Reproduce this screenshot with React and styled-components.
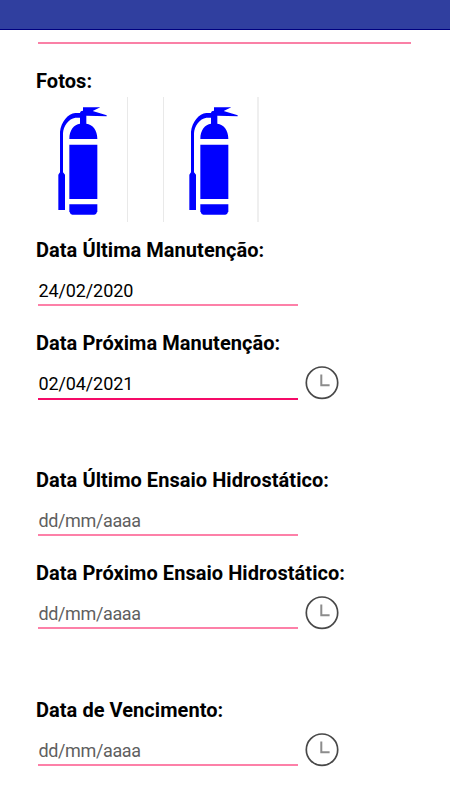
import React from 'react'
import styled, { createGlobalStyle } from 'styled-components'

const groups = [
  [
    { label: 'Data Última Manutenção:', value: '24/02/2020' },
    { label: 'Data Próxima Manutenção:', value: '02/04/2021', picker: true, focused: true },
  ],
  [
    { label: 'Data Último Ensaio Hidrostático:' },
    { label: 'Data Próximo Ensaio Hidrostático:', picker: true },
  ],
  [
    { label: 'Data de Vencimento:', picker: true },
  ],
]

const Extinguisher = () => (
  <ExtinguisherSvg viewBox='9 21 279 375' fill='#0000ff'>
    <path d='M159 52H211L188 63L230 76V79L169 77V101C188 103 202 120 202 147H118C118 120 132 103 150 101V83H136C116 86 100 108 99 130V247L105 254V360H85V254L90 247V125C93 97 114 70 136 69H150C151 64 154 62 159 62Z' />
    <path d='M118 164H202V327H118Z' />
    <path d='M118 343H202V364Q200 373 193 374H127Q120 373 118 364Z' />
  </ExtinguisherSvg>
)

const Clock = () => (
  <ClockSvg viewBox='0 0 34 35' fill='none'>
    <circle cx='17' cy='17.7' r='15.7' stroke='#484848' strokeWidth='1.7' />
    <path d='M16.3 9.6V20.3H24.6' stroke='#8c8c8c' strokeWidth='2' />
  </ClockSvg>
)

const DateField = ({ label, value, picker, focused }) => (
  <Field>
    <Label>{label}</Label>
    <FieldRow>
      <DateInput $focused={focused} $empty={!value}>{value || 'dd/mm/aaaa'}</DateInput>
      {picker && <PickerButton aria-label='Escolher data'><Clock /></PickerButton>}
    </FieldRow>
  </Field>
)

const App = () => {
  return (
    <Screen>
      <GlobalStyle />
      <StatusBar />
      <PreviousInput />
      <Form>
        <Label>Fotos:</Label>
        <Photos>
          <Photo $right='1px solid #e9e9e9'><Extinguisher /></Photo>
          <Photo $left='#e9e9e9' $right='2px solid #efefef'><Extinguisher /></Photo>
        </Photos>
        <Groups>
          {groups.map((fields, i) => (
            <Group key={i}>
              {fields.map(field => <DateField key={field.label} {...field} />)}
            </Group>
          ))}
        </Groups>
      </Form>
    </Screen>
  )
}

const GlobalStyle = createGlobalStyle`
  * {
    box-sizing: border-box;
  }
  body {
    margin: 0;
    background: #fff;
    font-family: Roboto, sans-serif;
  }
`
const Screen = styled.div`
  height: 800px;
  overflow: hidden;
`
const StatusBar = styled.div`
  height: 30px;
  background: #303f9f;
  border-bottom: 1px solid #00007f;
`
const PreviousInput = styled.div`
  height: 14px;
  margin: 0 39px 0 38px;
  border-bottom: 2px solid #fa80a6;
`
const Form = styled.form`
  padding: 25px 36px 0;
`
const Label = styled.div`
  height: 24px;
  line-height: 24px;
  font-size: 20px;
  font-weight: 700;
  letter-spacing: 0.05px;
  color: #000;
  white-space: nowrap;
`
const Photos = styled.div`
  display: flex;
  gap: 35px;
  margin: 4px 0 0 -4px;
`
const Photo = styled.div`
  width: 96px;
  height: 125px;
  border-left: 1px solid ${props => props.$left || 'transparent'};
  border-right: ${props => props.$right};
`
const ExtinguisherSvg = styled.svg`
  display: block;
  width: 93px;
  height: 125px;
`
const Groups = styled.div`
  display: flex;
  flex-direction: column;
  gap: 44px;
  margin-top: 16px;
`
const Group = styled.div``
const Field = styled.div`
  height: 93px;
`
const FieldRow = styled.div`
  display: flex;
  align-items: flex-start;
  gap: 7px;
  padding: 10px 0 0 2px;
`
const DateInput = styled.div`
  width: 260px;
  height: ${props => props.$focused ? '35px' : '34px'};
  padding: 8px 0 0 0.4px;
  line-height: 22px;
  font-size: 18px;
  letter-spacing: ${props => props.$empty ? '-0.36px' : '-0.1px'};
  color: ${props => props.$empty ? '#5f5f5f' : '#000'};
  border-bottom: 2px solid ${props => props.$focused ? '#f50a68' : '#fd80a8'};
`
const PickerButton = styled.button`
  padding: 0;
  border: 0;
  background: none;
`
const ClockSvg = styled.svg`
  display: block;
  width: 34px;
  height: 35px;
`

export default App
